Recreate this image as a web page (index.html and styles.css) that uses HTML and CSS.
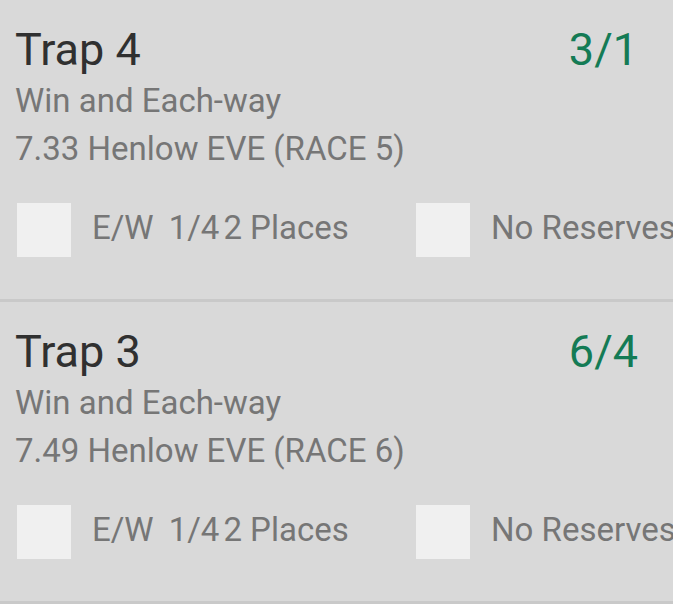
FILE: index.html
```html
<!DOCTYPE html>
<html>
<head>
<meta charset="utf-8">
<link rel="stylesheet" href="styles.css">
</head>
<body>
<div class="list">
  <div class="card">
    <div class="head">
      <div class="title">Trap 4</div>
      <div class="odds">3/1</div>
    </div>
    <div class="market">Win and Each-way</div>
    <div class="event">7.33 Henlow EVE (RACE 5)</div>
    <div class="options">
      <div class="option ew">
        <span class="box"></span>
        <span class="label"><span>E/W</span><span class="frac">1/4</span><span class="places">2 Places</span></span>
      </div>
      <div class="option">
        <span class="box"></span>
        <span class="label">No Reserves</span>
      </div>
    </div>
  </div>
  <div class="card">
    <div class="head">
      <div class="title">Trap 3</div>
      <div class="odds">6/4</div>
    </div>
    <div class="market">Win and Each-way</div>
    <div class="event">7.49 Henlow EVE (RACE 6)</div>
    <div class="options">
      <div class="option ew">
        <span class="box"></span>
        <span class="label"><span>E/W</span><span class="frac">1/4</span><span class="places">2 Places</span></span>
      </div>
      <div class="option">
        <span class="box"></span>
        <span class="label">No Reserves</span>
      </div>
    </div>
  </div>
</div>
</body>
</html>
```
FILE: styles.css
```css
html, body {
  margin: 0;
  padding: 0;
  background: #d9d9d9;
  overflow: hidden;
}
body {
  font-family: Roboto, "Noto Sans", sans-serif;
  width: 673px;
  height: 604px;
}
.list {
  display: flex;
  flex-direction: column;
}
.card {
  padding: 24px 35px 42px 15px;
  border-bottom: 3px solid #c9c9c9;
  white-space: nowrap;
}
.head {
  display: flex;
  justify-content: space-between;
  align-items: flex-start;
}
.title {
  font-size: 45px;
  line-height: 52px;
  color: #303030;
}
.odds {
  font-size: 45px;
  line-height: 52px;
  color: #147b55;
}
.market {
  font-size: 33px;
  line-height: 50px;
  color: #767676;
}
.event {
  font-size: 33px;
  line-height: 46px;
  color: #767676;
}
.options {
  display: flex;
  margin-top: 31px;
  padding-left: 2px;
}
.option {
  display: flex;
  align-items: flex-start;
  gap: 21px;
  flex: none;
}
.option.ew {
  width: 399px;
}
.box {
  width: 54px;
  height: 54px;
  background: #f0f0f0;
  flex: none;
}
.label {
  font-size: 33px;
  line-height: 49px;
  color: #767676;
}
.frac {
  margin-left: 15px;
}
.places {
  margin-left: 4px;
}
```
